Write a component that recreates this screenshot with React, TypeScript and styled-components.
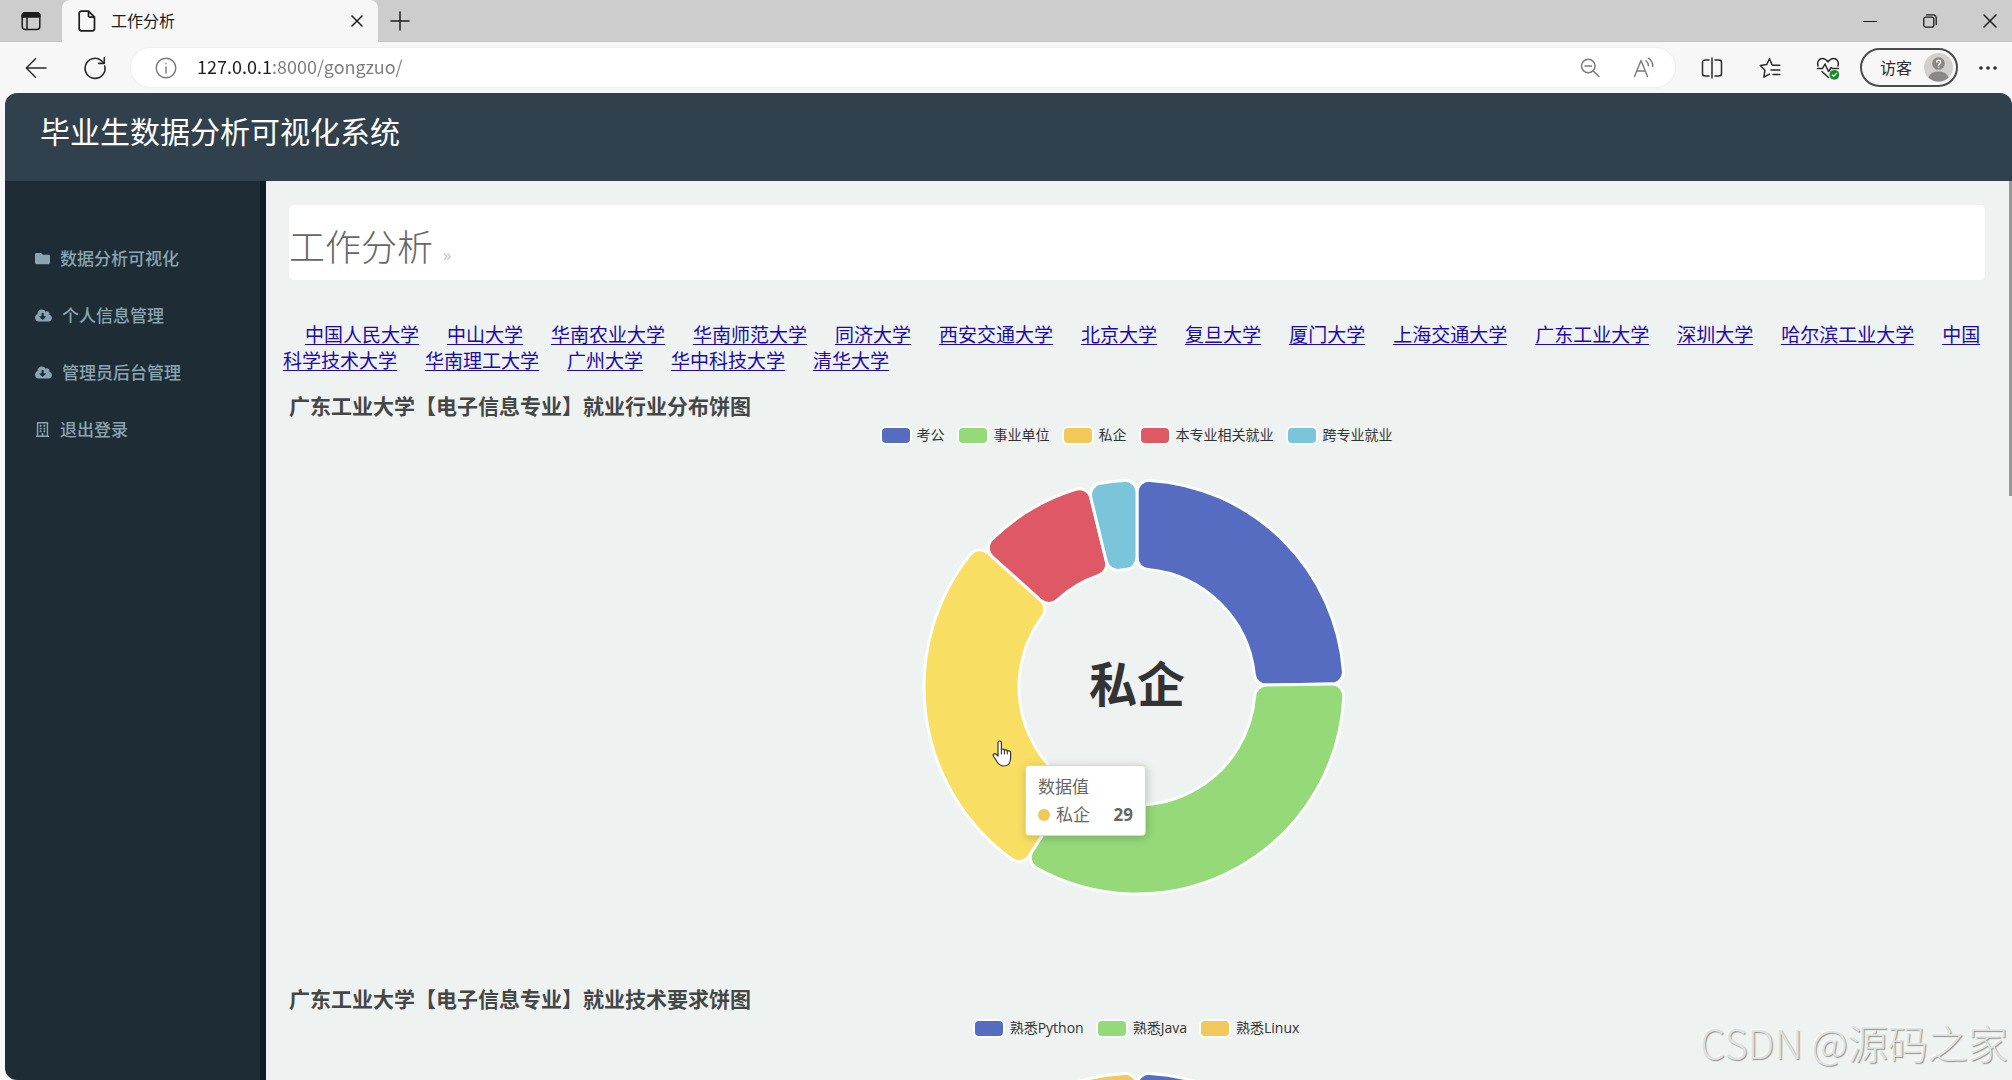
import React from "react";
import styled, { createGlobalStyle } from "styled-components";
import { FaFolder, FaCloudDownloadAlt, FaRegBuilding } from "react-icons/fa";

const cjk = `"Open Sans", "Noto Sans CJK SC", sans-serif`;

const GlobalStyle = createGlobalStyle`
  *, *::before, *::after { box-sizing: border-box; }
  body { margin: 0; font-family: ${cjk}; background: #f7f7f7; }
  h1, h2, ul, p { margin: 0; padding: 0; }
  ul { list-style: none; }
  button { border: 0; background: none; padding: 0; font: inherit; color: inherit; cursor: pointer; }
  svg { display: block; flex: none; }
`;

/* ---------- Browser frame ---------- */

const Window = styled.div`
  display: flex;
  flex-direction: column;
  height: 100vh;
  overflow: hidden;
  position: relative;
`;

const TabStrip = styled.div`
  display: flex;
  align-items: stretch;
  height: 42px;
  background: #cdcdcd;
  box-shadow: inset 0 -1px 0 #c2c2c2;
`;

const StripButton = styled.button<{ $width: number }>`
  display: flex;
  align-items: center;
  justify-content: center;
  width: ${(p) => p.$width}px;
  color: #1c1c1c;
`;

const Tab = styled.div`
  display: flex;
  align-items: center;
  width: 316px;
  padding: 0 13px 0 16px;
  background: #f7f7f7;
  border-radius: 8px 8px 0 0;
  color: #1c1c1c;
`;

const TabTitle = styled.span`
  flex: 1;
  margin-left: 15px;
  font-size: 16px;
  line-height: 20px;
`;

const WindowButtons = styled.div`
  display: flex;
  margin: 0 -8px 0 auto;
`;

const Toolbar = styled.div`
  display: flex;
  align-items: center;
  height: 51px;
  padding: 0 6px 0 7px;
  background: #f7f7f7;
  color: #2b2b2b;
`;

const ToolButton = styled.button<{ $width: number }>`
  display: flex;
  align-items: center;
  justify-content: center;
  width: ${(p) => p.$width}px;
  height: 38px;
`;

const AddressBar = styled.label`
  display: flex;
  flex: 1;
  align-items: center;
  height: 39px;
  margin: 0 8px 0 6px;
  padding: 0 4px 0 24px;
  border-radius: 20px;
  background: #fff;
  box-shadow: 0 0 3px #e6e6e6;
  color: #7a7a7a;
`;

const AddressInput = styled.input`
  flex: 1;
  min-width: 0;
  margin-left: 20px;
  padding: 0 0 3px;
  border: 0;
  outline: 0;
  font-family: "Noto Sans CJK SC", sans-serif;
  font-size: 18px;
  line-height: 26px;
  background: linear-gradient(90deg, #1d1d1d 75px, #7c7c7c 75px);
  background-clip: text;
  -webkit-background-clip: text;
  color: transparent;
`;

const Profile = styled.button`
  display: flex;
  align-items: center;
  gap: 12px;
  height: 39px;
  margin: 0 12px 0 3px;
  padding: 0 3px 0 18px;
  border: 2px solid #4c4c4c;
  border-radius: 20px;
  font-size: 16px;
  line-height: 20px;
`;

/* ---------- Web page ---------- */

const Page = styled.div`
  display: flex;
  flex: 1;
  flex-direction: column;
  min-height: 0;
  margin-left: 5px;
  border-radius: 12px 12px 0 12px;
  overflow: hidden;
  background: #eef2f1;
`;

const Header = styled.header`
  height: 88px;
  padding: 19px 35px;
  background: #30414d;
  color: #fff;
`;

const SystemName = styled.div`
  font-size: 30px;
  line-height: 40px;
`;

const Body = styled.div`
  display: flex;
  flex: 1;
  min-height: 0;
`;

const Sidebar = styled.nav`
  width: 261px;
  padding: 49px 0 0 30px;
  background: #1e2d35;
  border-right: 6px solid #101d23;
`;

const NavLink = styled.a`
  display: flex;
  align-items: center;
  gap: 10px;
  height: 57px;
  color: #8ba4b2;
  font-size: 17px;
  font-weight: 500;
  line-height: 24px;
  text-decoration: none;
`;

const Main = styled.main`
  position: relative;
  flex: 1;
  min-width: 0;
  padding: 24px 17px 0;
  overflow: hidden;
`;

const ScrollThumb = styled.div`
  position: absolute;
  top: 0;
  right: 0;
  width: 3px;
  height: 35%;
  background: #959998;
`;

const TitlePanel = styled.div`
  display: flex;
  align-items: baseline;
  gap: 10px;
  height: 75px;
  margin: 0 10px 0 6px;
  padding-top: 18px;
  border-radius: 5px;
  background: #fff;
`;

const PageTitle = styled.h1`
  font-size: 36px;
  font-weight: 300;
  line-height: 50px;
  color: #666;
`;

const Crumb = styled.small`
  font-size: 17px;
  color: #c4c4c4;
`;

const Schools = styled.p`
  margin-top: 43px;
  text-indent: 22px;
  font-family: "Liberation Sans", "Noto Sans CJK SC", sans-serif;
  font-size: 19px;
  line-height: 26px;
`;

const School = styled.a`
  margin-right: 28px;
  color: #1d0aa5;
  text-decoration: underline;
  text-decoration-thickness: 1px;
  text-underline-offset: 2px;
`;

const ChartSection = styled.section`
  display: flex;
  flex-direction: column;
  height: 593px;
  margin: 0 10px 0 6px;

  &:first-of-type {
    margin-top: 16px;
  }
`;

const ChartTitle = styled.h2`
  font-size: 21px;
  font-weight: 700;
  line-height: 30px;
  color: #444746;
`;

const Legend = styled.ul`
  display: flex;
  justify-content: center;
  gap: 14px;
  margin-top: 4px;
`;

const LegendItem = styled.button`
  display: flex;
  align-items: center;
  gap: 7px;
  height: 20px;
  color: #333;
  font-size: 14px;
  line-height: 20px;
`;

const Swatch = styled.span<{ $color: string }>`
  width: 28px;
  height: 15px;
  border-radius: 4px;
  background: ${(p) => p.$color};
  box-shadow: 0 0 0 2px #fafdfc;
`;

const Donut = styled.div`
  position: relative;
  align-self: center;
  margin-top: 22px;
`;

const CenterLabel = styled.text`
  font-size: 48px;
  font-weight: 700;
  fill: #333;
`;

const Tooltip = styled.div`
  position: absolute;
  top: 298px;
  left: 108px;
  width: 121px;
  padding: 7px 12px 6px;
  border: 1px solid #f2d68a;
  border-radius: 4px;
  background: #fff;
  box-shadow: 1px 2px 10px rgba(0, 0, 0, 0.2);
  color: #666;
  font-size: 17px;
  line-height: 28px;
`;

const TooltipRow = styled.div`
  display: flex;
  align-items: center;
  gap: 6px;

  strong {
    margin-left: auto;
  }
`;

const Dot = styled.span`
  width: 12px;
  height: 12px;
  border-radius: 50%;
  background: #f2c85b;
`;

const Pointer = styled.svg`
  position: absolute;
  top: 273px;
  left: 75px;
`;

const Watermark = styled.div`
  position: absolute;
  right: 4px;
  bottom: 9px;
  font-family: "Noto Sans CJK SC", sans-serif;
  font-size: 40px;
  font-weight: 300;
  line-height: 58px;
  color: #dfe2e1;
  text-shadow: 1px 1px 1px #8f9392, -1px -1px 0 #f8fafa;
  pointer-events: none;
`;

/* ---------- Icons ---------- */

const Icon = ({ size = 20, width = 1.5, children }: { size?: number; width?: number; children: React.ReactNode }) => (
  <svg
    width={size}
    height={size}
    viewBox={`0 0 ${size} ${size}`}
    fill="none"
    stroke="currentColor"
    strokeWidth={width}
    strokeLinecap="round"
    strokeLinejoin="round"
    aria-hidden="true"
  >
    {children}
  </svg>
);

const TabActionsIcon = () => (
  <Icon>
    <rect x="1.2" y="1.8" width="17.6" height="16.6" rx="3" />
    <path d="M1.2 6V4.8a3 3 0 0 1 3-3h11.6a3 3 0 0 1 3 3V6z" fill="currentColor" />
    <path d="M6 6.500v11.500" />
  </Icon>
);
const FileIcon = () => (
  <svg width="18" height="22" viewBox="0 0 18 22" fill="none" stroke="currentColor" strokeWidth="1.700" strokeLinejoin="round" aria-hidden="true">
    <path d="M3.500 1.200h7l6 6v11.300a2.300 2.300 0 0 1-2.300 2.300H3.500a2.300 2.300 0 0 1-2.300-2.300V3.500a2.300 2.300 0 0 1 2.300-2.300z" />
    <path d="M10.500 1.500v4.200a1.500 1.500 0 0 0 1.500 1.500h4.200" />
  </svg>
);
const CloseIcon = ({ size }: { size: number }) => (
  <Icon size={size}>
    <path d={`M1 1L${size - 1} ${size - 1}M${size - 1} 1L1 ${size - 1}`} />
  </Icon>
);
const PlusIcon = () => (
  <Icon>
    <path d="M10 1v18M1 10h18" />
  </Icon>
);
const MinimizeIcon = () => (
  <Icon size={14} width={1.2}>
    <path d="M0.500 7.500h13" />
  </Icon>
);
const RestoreIcon = () => (
  <Icon size={14} width={1.3}>
    <rect x="0.800" y="3.200" width="10" height="10" rx="2" />
    <path d="M3.500 0.900h6.700a3 3 0 0 1 3 3v6.600" />
  </Icon>
);
const BackIcon = () => (
  <Icon size={22}>
    <path d="M21 11H1.500M10.500 1.800L1.300 11l9.200 9.200" />
  </Icon>
);
const ReloadIcon = () => (
  <Icon size={24} width={1.6}>
    <path d="M21.800 10A10 10 0 1 1 18 4.300l3 2.700" />
    <path d="M21.300 1.800v5.600h-5.600" />
  </Icon>
);
const InfoIcon = () => (
  <Icon size={22} width={1.4}>
    <circle cx="11" cy="11" r="9.800" />
    <path d="M11 10v6M11 6.500v0.300" />
  </Icon>
);
const ZoomOutIcon = () => (
  <Icon>
    <circle cx="8.300" cy="8" r="6.800" />
    <path d="M5 8h6.600M13.300 13l5.500 5.500" />
  </Icon>
);
const ReadAloudIcon = () => (
  <Icon size={22} width={1.4}>
    <path d="M1.500 19.500L8 3.500l6.500 16M3.800 14h8.400" />
    <path d="M13 3.800c1.600 1.200 2.400 2.900 2.400 5M15.500 1.200c2.800 1.900 4.300 4.700 4.300 8.300" />
  </Icon>
);
const SplitIcon = () => (
  <Icon size={22}>
    <path d="M8 3H4a2.500 2.500 0 0 0-2.500 2.500v11A2.500 2.500 0 0 0 4 19h4M14 3h4a2.500 2.500 0 0 1 2.500 2.500v11A2.500 2.500 0 0 1 18 19h-4M11 1v20" />
  </Icon>
);
const FavoritesIcon = () => (
  <Icon size={22}>
    <path d="M13.800 8.200L13 7.800 10.500 1.800 7.800 7.500 1.300 8.400l4.600 4.800-1 7 5.400-3" />
    <path d="M14 8.200h6.800M12 13h8.800M14 17.500h6.800" />
  </Icon>
);
const HealthIcon = () => (
  <svg width="24" height="24" viewBox="0 0 24 24" fill="none" stroke="currentColor" strokeWidth="1.500" strokeLinecap="round" strokeLinejoin="round" aria-hidden="true">
    <path d="M2 10C0.500 5.500 3.200 2.500 6.500 2.500c2.400 0 4 1.400 5.500 3.300 1.500-1.900 3.100-3.300 5.500-3.300 3.300 0 6 3 4.500 7.500" />
    <path d="M1.500 12.500h5L9 8l3.500 7.500 2.700-4 1.300 1h6M6 15.500l6.500 6" />
    <circle cx="18.300" cy="18.800" r="4.900" fill="#1c8a24" stroke="none" />
    <path d="M16.200 19l1.500 1.400 2.800-3" stroke="#fff" strokeWidth="1.200" />
  </svg>
);
const AvatarIcon = () => (
  <svg width="29" height="29" viewBox="0 0 29 29" aria-hidden="true">
    <circle cx="14.500" cy="14.500" r="14.500" fill="#d2d0ce" />
    <circle cx="14.500" cy="10.500" r="6.300" fill="#8a8886" />
    <path d="M4.500 24.500c1.500-4.400 5.500-6 10-6s8.500 1.600 10 6a14.500 14.500 0 0 1-20 0z" fill="#8a8886" />
    <path d="M12.600 9.200c0-2.600 4-2.600 4 0 0 1.500-2 1.600-2 3.300M14.600 14.300v0.300" fill="none" stroke="#fff" strokeWidth="1.300" strokeLinecap="round" />
  </svg>
);
const MoreIcon = () => (
  <svg width="20" height="6" viewBox="0 0 20 6" fill="currentColor" aria-hidden="true">
    <circle cx="3" cy="3" r="1.800" />
    <circle cx="10" cy="3" r="1.800" />
    <circle cx="17" cy="3" r="1.800" />
  </svg>
);

/* ---------- Data ---------- */

type Slice = { name: string; value: number; color: string; active?: string };

const palette = { blue: "#566cc0", green: "#95d979", yellow: "#f2c85b", red: "#de5866", teal: "#7ac5da" };

const industry: Slice[] = [
  { name: "考公", value: 26, color: palette.blue },
  { name: "事业单位", value: 36, color: palette.green },
  { name: "私企", value: 29, color: palette.yellow, active: "#f9de64" },
  { name: "本专业相关就业", value: 10, color: palette.red },
  { name: "跨专业就业", value: 4, color: palette.teal },
];

const skills: Slice[] = [
  { name: "熟悉Python", value: 35, color: palette.blue },
  { name: "熟悉Java", value: 35, color: palette.green },
  { name: "熟悉Linux", value: 35, color: palette.yellow },
];

const schools = [
  "中国人民大学", "中山大学", "华南农业大学", "华南师范大学", "同济大学", "西安交通大学", "北京大学",
  "复旦大学", "厦门大学", "上海交通大学", "广东工业大学", "深圳大学", "哈尔滨工业大学", "中国科学技术大学",
  "华南理工大学", "广州大学", "华中科技大学", "清华大学",
];

const navItems = [
  { label: "数据分析可视化", icon: <FaFolder size={15} /> },
  { label: "个人信息管理", icon: <FaCloudDownloadAlt size={17} /> },
  { label: "管理员后台管理", icon: <FaCloudDownloadAlt size={17} /> },
  { label: "退出登录", icon: <FaRegBuilding size={15} /> },
];

/* ---------- Donut chart ---------- */

const CENTER = 220;
const INNER = 118;
const OUTER = 207;
const CORNER = 12;

const point = (radius: number, angle: number) =>
  `${(CENTER + radius * Math.sin(angle)).toFixed(2)} ${(CENTER - radius * Math.cos(angle)).toFixed(2)}`;

/* Ring segment between two clockwise angles, with its four corners rounded. */
function sectorPath(from: number, to: number, outer: number) {
  const outerTurn = Math.asin(CORNER / (outer - CORNER));
  const innerTurn = Math.asin(CORNER / (INNER + CORNER));
  const outerSide = Math.sqrt((outer - CORNER) ** 2 - CORNER ** 2);
  const innerSide = Math.sqrt((INNER + CORNER) ** 2 - CORNER ** 2);
  const large = to - from > Math.PI ? 1 : 0;
  const corner = `A${CORNER} ${CORNER} 0 0 1`;
  return [
    `M${point(outerSide, from)}`,
    `${corner} ${point(outer, from + outerTurn)}`,
    `A${outer} ${outer} 0 ${large} 1 ${point(outer, to - outerTurn)}`,
    `${corner} ${point(outerSide, to)}`,
    `L${point(innerSide, to)}`,
    `${corner} ${point(INNER, to - innerTurn)}`,
    `A${INNER} ${INNER} 0 ${large} 0 ${point(INNER, from + innerTurn)}`,
    `${corner} ${point(innerSide, from)}`,
    "Z",
  ].join(" ");
}

function DonutChart({ data, title, children }: { data: Slice[]; title: string; children?: React.ReactNode }) {
  const total = data.reduce((sum, d) => sum + d.value, 0);
  const active = data.find((d) => d.active);
  let angle = 0;
  return (
    <ChartSection>
      <ChartTitle>{title}</ChartTitle>
      <Legend>
        {data.map((d) => (
          <li key={d.name}>
            <LegendItem type="button">
              <Swatch $color={d.color} />
              {d.name}
            </LegendItem>
          </li>
        ))}
      </Legend>
      <Donut>
        <svg width="440" height="440" viewBox="0 0 440 440" role="img" aria-label={title}>
          {data.map((d) => {
            const from = angle;
            angle += (d.value / total) * Math.PI * 2;
            return (
              <path
                key={d.name}
                d={sectorPath(from, angle, d.active ? OUTER + 6 : OUTER)}
                fill={d.active ?? d.color}
                stroke="#fbfefb"
                strokeWidth="3"
              />
            );
          })}
          {active && (
            <CenterLabel x={CENTER} y={CENTER + 15} textAnchor="middle">
              {active.name}
            </CenterLabel>
          )}
        </svg>
        {children}
      </Donut>
    </ChartSection>
  );
}

export default function App() {
  return (
    <Window>
      <GlobalStyle />
      <TabStrip>
        <StripButton $width={62} aria-label="标签页操作">
          <TabActionsIcon />
        </StripButton>
        <Tab>
          <FileIcon />
          <TabTitle>工作分析</TabTitle>
          <StripButton $width={16} aria-label="关闭标签页">
            <CloseIcon size={12} />
          </StripButton>
        </Tab>
        <StripButton $width={44} aria-label="新建标签页">
          <PlusIcon />
        </StripButton>
        <WindowButtons>
          <StripButton $width={60} aria-label="最小化">
            <MinimizeIcon />
          </StripButton>
          <StripButton $width={60} aria-label="还原">
            <RestoreIcon />
          </StripButton>
          <StripButton $width={60} aria-label="关闭">
            <CloseIcon size={14} />
          </StripButton>
        </WindowButtons>
      </TabStrip>
      <Toolbar>
        <ToolButton $width={58} aria-label="后退">
          <BackIcon />
        </ToolButton>
        <ToolButton $width={60} aria-label="刷新">
          <ReloadIcon />
        </ToolButton>
        <AddressBar>
          <InfoIcon />
          <AddressInput aria-label="地址" defaultValue="127.0.0.1:8000/gongzuo/" spellCheck={false} />
          <ToolButton $width={54} aria-label="缩小">
            <ZoomOutIcon />
          </ToolButton>
          <ToolButton $width={54} aria-label="朗读此页">
            <ReadAloudIcon />
          </ToolButton>
        </AddressBar>
        <ToolButton $width={58} aria-label="拆分屏幕">
          <SplitIcon />
        </ToolButton>
        <ToolButton $width={58} aria-label="收藏夹">
          <FavoritesIcon />
        </ToolButton>
        <ToolButton $width={58} aria-label="浏览器概要">
          <HealthIcon />
        </ToolButton>
        <Profile type="button">
          访客
          <AvatarIcon />
        </Profile>
        <ToolButton $width={36} aria-label="更多">
          <MoreIcon />
        </ToolButton>
      </Toolbar>
      <Page>
        <Header>
          <SystemName>毕业生数据分析可视化系统</SystemName>
        </Header>
        <Body>
          <Sidebar>
            {navItems.map((item) => (
              <NavLink key={item.label} href="#">
                {item.icon}
                {item.label}
              </NavLink>
            ))}
          </Sidebar>
          <Main>
            <TitlePanel>
              <PageTitle>工作分析</PageTitle>
              <Crumb>»</Crumb>
            </TitlePanel>
            <Schools>
              {schools.map((name) => (
                <School key={name} href="#">
                  {name}
                </School>
              ))}
            </Schools>
            <DonutChart data={industry} title="广东工业大学【电子信息专业】就业行业分布饼图">
              <Pointer width="22" height="28" viewBox="0 0 22 28" aria-hidden="true">
                <path
                  d="M6 2.800c0-2.400 3.400-2.400 3.400 0v6.700c1-.9 2.700-.5 3 .7 1-.7 2.600-.3 2.900.9 1.300-.7 3.300 0 3.300 1.900v5.300c0 4.600-2.700 7.700-6.800 7.700-3.200 0-5-1.300-6.700-4.200l-3.600-5.600c-1.200-2 1.100-3.400 2.700-1.900L6 16z"
                  fill="#fff"
                  stroke="#333"
                  strokeWidth="1.200"
                  strokeLinejoin="round"
                />
                <path d="M9.400 9.500v4.500M12.400 10.200V14M15.300 11.100V14" stroke="#333" strokeWidth="1.100" strokeLinecap="round" />
              </Pointer>
              <Tooltip role="tooltip">
                <div>数据值</div>
                <TooltipRow>
                  <Dot />
                  私企
                  <strong>29</strong>
                </TooltipRow>
              </Tooltip>
            </DonutChart>
            <DonutChart data={skills} title="广东工业大学【电子信息专业】就业技术要求饼图" />
            <ScrollThumb />
          </Main>
        </Body>
      </Page>
      <Watermark>CSDN @源码之家</Watermark>
    </Window>
  );
}
